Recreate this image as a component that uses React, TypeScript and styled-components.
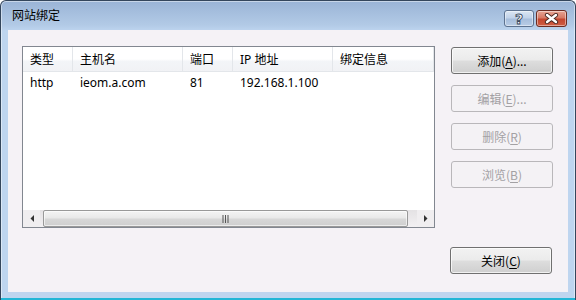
import React from 'react';
import styled, { createGlobalStyle } from 'styled-components';

const GlobalStyle = createGlobalStyle`
    html, body {
        margin: 0;
        padding: 0;
        background: #ffffff;
    }
    body {
        font-family: "Noto Sans", "Noto Sans CJK SC", sans-serif;
        font-size: 12px;
        color: #000;
    }
`

const Window = styled.div`
    width: 576px;
    height: 300px;
    box-sizing: border-box;
    display: flex;
    flex-direction: column;
    border: 1px solid #34465c;
    border-bottom: none;
    border-radius: 6px 6px 0 0;
    background: linear-gradient(180deg, #9ab4d6 0px, #b2cae6 24px, #bed5ef 30px, #bed5ef 100%);
    box-shadow: inset 0 0 0 1px rgba(255, 255, 255, 0.45);
    overflow: hidden;
`

const TitleBar = styled.div`
    height: 29px;
    display: flex;
    align-items: flex-start;
    padding: 0 8px 0 11px;
`

const Title = styled.div`
    font-family: "Noto Sans CJK SC", sans-serif;
    font-size: 12px;
    line-height: 14px;
    margin-top: 7px;
    color: #000;
    flex: 1;
`

const CaptionButtons = styled.div`
    display: flex;
    gap: 2px;
    margin-top: 9px;
`

const CaptionButton = styled.div<{ $close?: boolean }>`
    width: ${p => (p.$close ? 31 : 30)}px;
    height: 17px;
    box-sizing: border-box;
    border-radius: 3px;
    display: flex;
    align-items: center;
    justify-content: center;
    border: 1px solid ${p => (p.$close ? '#6b2c22' : '#5d7290')};
    background: ${p => p.$close
        ? 'linear-gradient(180deg, #e7a595 0%, #d77a66 45%, #c3462f 55%, #cf5e44 100%)'
        : 'linear-gradient(180deg, #dbe6f3 0%, #c2d3ea 45%, #a7bedc 55%, #b8cce6 100%)'};
    box-shadow: inset 0 0 0 1px rgba(255, 255, 255, 0.45);
`

const HelpMark = styled.span`
    font-family: "DejaVu Sans", sans-serif;
    font-weight: bold;
    font-size: 14px;
    line-height: 14px;
    color: #fff;
    -webkit-text-stroke: 0.9px #3a4a60;
`

const Frame = styled.div`
    flex: 1;
    display: flex;
    padding: 0 7px 6px 7px;
    border-bottom: 2px solid #22b6d6;
`

const Content = styled.div`
    flex: 1;
    background: #f5f2f6;
    display: flex;
    flex-direction: column;
    padding: 16px 15px 18px 14px;
`

const TopRow = styled.div`
    display: flex;
    gap: 16px;
`

const ListView = styled.div`
    width: 413px;
    height: 182px;
    box-sizing: border-box;
    border: 1px solid #828790;
    background: #fff;
    display: flex;
    flex-direction: column;
`

const ListBody = styled.div`
    flex: 1;
`

const HeaderRow = styled.div`
    display: flex;
    height: 24px;
    background: linear-gradient(180deg, #ffffff 0%, #ffffff 50%, #f3f5f8 60%, #f1f2f5 100%);
    border-bottom: 1px solid #e3e6ea;
`

const HeaderCell = styled.div<{ $w: number }>`
    width: ${p => p.$w}px;
    box-sizing: border-box;
    padding-left: 7px;
    display: flex;
    align-items: center;
    border-right: 1px solid #e3e6ea;
    font-family: "Noto Sans", "Noto Sans CJK SC", sans-serif;
`

const DataRow = styled.div`
    display: flex;
    height: 18px;
    margin-top: 1px;
`

const DataCell = styled.div<{ $w: number }>`
    width: ${p => p.$w}px;
    box-sizing: border-box;
    padding-left: 7px;
    display: flex;
    align-items: center;
`

const HScroll = styled.div`
    height: 17px;
    display: flex;
    background: #f0eef0;
`

const ArrowButton = styled.div`
    width: 17px;
    display: flex;
    align-items: center;
    justify-content: center;
`

const Track = styled.div`
    flex: 1;
    display: flex;
    padding: 0 9px 0 3px;
    background: linear-gradient(180deg, #e4e2e4 0%, #f2f0f2 100%);
`

const Thumb = styled.div`
    flex: 1;
    box-sizing: border-box;
    border: 1px solid #999;
    border-radius: 2px;
    background: linear-gradient(180deg, #f4f4f4 0%, #e9e9e9 45%, #d7d7d7 55%, #cfcfcf 100%);
    display: flex;
    align-items: center;
    justify-content: center;
    box-shadow: inset 0 0 0 1px rgba(255, 255, 255, 0.6);
`

const SideColumn = styled.div`
    display: flex;
    flex-direction: column;
    gap: 11px;
    margin-top: 1px;
`

const Button = styled.div<{ $disabled?: boolean }>`
    width: 102px;
    height: 27px;
    box-sizing: border-box;
    border-radius: 3px;
    display: flex;
    align-items: center;
    justify-content: center;
    font-family: "Noto Sans CJK SC", sans-serif;
    font-size: 12px;
    border: 1px solid ${p => (p.$disabled ? '#b9b7ba' : '#707070')};
    color: ${p => (p.$disabled ? '#a3a1a4' : '#000')};
    background: ${p => p.$disabled
        ? '#f4f2f5'
        : 'linear-gradient(180deg, #f2f2f2 0%, #ebebeb 48%, #dddddd 52%, #cfcfcf 100%)'};
    box-shadow: ${p => (p.$disabled ? 'none' : 'inset 0 0 0 1px rgba(255, 255, 255, 0.7)')};

    u {
        text-decoration: underline;
        text-underline-offset: 2px;
    }
`

const Footer = styled.div`
    flex: 1;
    display: flex;
    justify-content: flex-end;
    align-items: flex-end;
    padding-right: 1px;
`

const columns = [
    { title: '类型', w: 50, value: 'http' },
    { title: '主机名', w: 110, value: 'ieom.a.com' },
    { title: '端口', w: 50, value: '81' },
    { title: 'IP 地址', w: 100, value: '192.168.1.100' },
    { title: '绑定信息', w: 101, value: '' },
];

const sideButtons = [
    { label: '添加(', key: 'A', tail: ')...', disabled: false },
    { label: '编辑(', key: 'E', tail: ')...', disabled: true },
    { label: '删除(', key: 'R', tail: ')', disabled: true },
    { label: '浏览(', key: 'B', tail: ')', disabled: true },
];

const CloseGlyph = () => (
    <svg width="17" height="11" viewBox="0 0 17 11">
        <path d="M4 2 L13 9 M13 2 L4 9" stroke="#4a2a24" strokeWidth="4.2" strokeLinecap="round" />
        <path d="M4 2 L13 9 M13 2 L4 9" stroke="#ffffff" strokeWidth="2.4" strokeLinecap="round" />
    </svg>
);

const Grip = () => (
    <svg width="8" height="8" viewBox="0 0 8 8">
        <path d="M1 0 V8 M3.5 0 V8 M6 0 V8" stroke="#555" strokeWidth="1" />
    </svg>
);

const LeftArrow = () => (
    <svg width="4" height="7" viewBox="0 0 4 7">
        <path d="M4 0 L0.5 3.5 L4 7 Z" fill="#333" />
    </svg>
);

const RightArrow = () => (
    <svg width="4" height="7" viewBox="0 0 4 7">
        <path d="M0 0 L3.5 3.5 L0 7 Z" fill="#333" />
    </svg>
);

export default function App() {
    return (
        <>
            <GlobalStyle />
            <Window>
                <TitleBar>
                    <Title>网站绑定</Title>
                    <CaptionButtons>
                        <CaptionButton><HelpMark>?</HelpMark></CaptionButton>
                        <CaptionButton $close><CloseGlyph /></CaptionButton>
                    </CaptionButtons>
                </TitleBar>
                <Frame>
                    <Content>
                        <TopRow>
                            <ListView>
                                <ListBody>
                                    <HeaderRow>
                                        {columns.map(c => (
                                            <HeaderCell key={c.title} $w={c.w}>{c.title}</HeaderCell>
                                        ))}
                                    </HeaderRow>
                                    <DataRow>
                                        {columns.map(c => (
                                            <DataCell key={c.title} $w={c.w}>{c.value}</DataCell>
                                        ))}
                                    </DataRow>
                                </ListBody>
                                <HScroll>
                                    <ArrowButton><LeftArrow /></ArrowButton>
                                    <Track>
                                        <Thumb><Grip /></Thumb>
                                    </Track>
                                    <ArrowButton><RightArrow /></ArrowButton>
                                </HScroll>
                            </ListView>
                            <SideColumn>
                                {sideButtons.map(b => (
                                    <Button key={b.key} $disabled={b.disabled}>
                                        {b.label}<u>{b.key}</u>{b.tail}
                                    </Button>
                                ))}
                            </SideColumn>
                        </TopRow>
                        <Footer>
                            <Button>关闭(<u>C</u>)</Button>
                        </Footer>
                    </Content>
                </Frame>
            </Window>
        </>
    );
}
